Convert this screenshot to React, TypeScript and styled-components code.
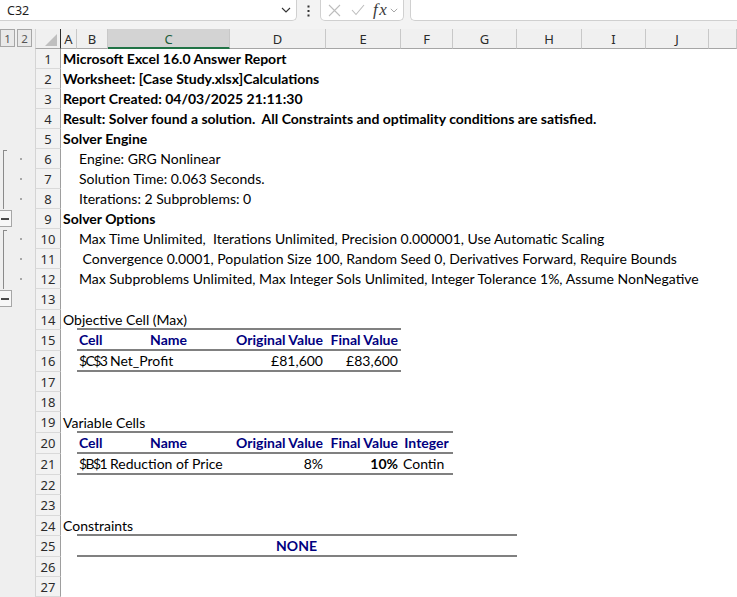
import React from "react";
import styled, { createGlobalStyle } from "styled-components";

const GlobalStyle = createGlobalStyle`
  html, body { margin: 0; padding: 0; background: #fff; overflow: hidden; }
  #root { width: 737px; height: 597px; overflow: hidden; }
`;

const CELL_FONT = `Lato, "Open Sans", sans-serif`;
const UI_FONT = `"Noto Sans", "Liberation Sans", sans-serif`;

const COL_LETTERS = ["A", "B", "C", "D", "E", "F", "G", "H", "I", "J", ""];
const COL_W = [16, 31, 122, 96, 75, 52, 64, 65, 64, 63];
const ROW_H = [20, 20, 20, 20, 20, 20, 20, 20, 20, 20, 20, 20, 21, 20, 21, 21, 20, 20, 21, 21, 21, 20, 21, 20, 21, 20, 20];

/* ---------- top bar ---------- */
const TopBar = styled.div`
  display: flex;
  align-items: flex-start;
  height: 29px;
  background: #f3f3f3;
  font-family: ${UI_FONT};
`;

const NameBox = styled.div`
  box-sizing: border-box;
  width: 297px;
  height: 21px;
  background: #fff;
  border-right: 1px solid #d0d0d0;
  border-bottom: 1px solid #d0d0d0;
  border-bottom-right-radius: 5px;
  display: flex;
  align-items: center;
  justify-content: space-between;
  padding: 0 5px 0 7px;
  font-size: 12.5px;
  color: #1f1f1f;
`;

const Kebab = styled.div`
  width: 23px;
  height: 21px;
  display: flex;
  align-items: center;
  justify-content: center;
`;

const FxBox = styled.div`
  box-sizing: border-box;
  width: 84px;
  height: 21px;
  background: #fff;
  border: 1px solid #d0d0d0;
  border-top: none;
  border-radius: 0 0 5px 5px;
  display: flex;
  align-items: center;
  padding: 0 2px 0 7px;
  gap: 10px;
`;

const FxLabel = styled.span`
  font-family: "Liberation Serif", "DejaVu Serif", serif;
  font-style: italic;
  font-size: 17px;
  letter-spacing: 1.5px;
  line-height: 18px;
  color: #3a3a3a;
  margin-left: -2px;
  display: flex;
  align-items: center;
  gap: 2px;
`;

const FormulaBox = styled.div`
  box-sizing: border-box;
  flex: 1;
  margin-left: 6px;
  height: 21px;
  background: #fff;
  border-left: 1px solid #d0d0d0;
  border-bottom: 1px solid #d0d0d0;
  border-bottom-left-radius: 5px;
`;

/* ---------- sheet grid ---------- */
const Sheet = styled.div`
  display: grid;
  grid-template-columns: 35px 26px ${COL_W.map((w) => `${w}px`).join(" ")} 1fr;
  grid-template-rows: 20px ${ROW_H.map((h) => `${h}px`).join(" ")};
  background: #fff;
`;

type Place = { $row: number; $col: number; $span?: number; $rowSpan?: number };

const OutlineTrack = styled.div<Place>`
  grid-row: ${(p) => p.$row} / span ${(p) => p.$rowSpan ?? 1};
  grid-column: ${(p) => p.$col};
  background: #efefef;
`;

const LevelButtons = styled.div<Place>`
  grid-row: ${(p) => p.$row};
  grid-column: ${(p) => p.$col};
  background: #efefef;
  display: flex;
  gap: 2px;
  align-items: flex-start;
`;

const LevelButton = styled.div`
  box-sizing: border-box;
  width: 15px;
  height: 18px;
  border: 1px solid #a6a6a6;
  background: #e9e9e9;
  display: flex;
  align-items: center;
  justify-content: center;
  font-family: ${UI_FONT};
  font-size: 11.5px;
  color: #555;
`;

const Bracket = styled.div<Place>`
  grid-row: ${(p) => p.$row} / span ${(p) => p.$rowSpan ?? 1};
  grid-column: ${(p) => p.$col};
  margin: 1px 0 0 3px;
  width: 3px;
  border-left: 1px solid #8a8a8a;
  border-top: 1px solid #8a8a8a;
`;

const MinusBox = styled.div<Place>`
  grid-row: ${(p) => p.$row};
  grid-column: ${(p) => p.$col};
  box-sizing: border-box;
  width: 12px;
  height: 17px;
  margin-top: 1px;
  border: 1px solid #a6a6a6;
  border-left: none;
  background: #f7f7f7;
  display: flex;
  align-items: center;
  padding-left: 1px;
`;

const Dash = styled.span`
  width: 8px;
  height: 2px;
  background: #4a4a4a;
`;

const OutlineDot = styled.div<Place>`
  grid-row: ${(p) => p.$row};
  grid-column: ${(p) => p.$col};
  align-self: center;
  justify-self: start;
  margin-left: 20px;
  width: 2px;
  height: 2px;
  background: #a8a8a8;
`;

const Corner = styled.div<Place>`
  grid-row: ${(p) => p.$row};
  grid-column: ${(p) => p.$col};
  box-sizing: border-box;
  background: #f0f0f0;
  border-left: 1px solid #d4d4d4;
  border-right: 1px solid #2b2b2b;
  border-bottom: 1px solid #a6a6a6;
  display: flex;
  align-items: flex-end;
  justify-content: flex-end;
  padding: 0 3px 2px 0;
`;

const ColHead = styled.div<Place & { $selected?: boolean }>`
  grid-row: ${(p) => p.$row};
  grid-column: ${(p) => p.$col};
  box-sizing: border-box;
  background: ${(p) => (p.$selected ? "#d3d3d3" : "#f0f0f0")};
  border-right: 1px solid #c8c8c8;
  border-bottom: ${(p) => (p.$selected ? "2px solid #217346" : "1px solid #a6a6a6")};
  display: flex;
  align-items: center;
  justify-content: center;
  padding-top: ${(p) => (p.$selected ? "1px" : "0")};
  font-family: ${UI_FONT};
  font-size: 13px;
  color: ${(p) => (p.$selected ? "#1d5e3a" : "#2b2b2b")};
`;

const RowHead = styled.div<Place>`
  grid-row: ${(p) => p.$row};
  grid-column: ${(p) => p.$col};
  box-sizing: border-box;
  background: #f2f2f2;
  border-left: 1px solid #d4d4d4;
  border-right: 1px solid #9e9e9e;
  border-bottom: 1px solid #d9d9d9;
  display: flex;
  align-items: center;
  justify-content: center;
  font-family: ${UI_FONT};
  font-size: 13px;
  color: #2b2b2b;
`;

type CellStyle = Place & {
  $bold?: boolean;
  $navy?: boolean;
  $align?: "left" | "right" | "center";
  $rule?: boolean;
  $tight?: boolean;
};

const Cell = styled.div<CellStyle>`
  grid-row: ${(p) => p.$row};
  grid-column: ${(p) => p.$col} / span ${(p) => p.$span ?? 1};
  box-sizing: border-box;
  min-width: 0;
  display: flex;
  align-items: center;
  justify-content: ${(p) =>
    p.$align === "right" ? "flex-end" : p.$align === "center" ? "center" : "flex-start"};
  padding: 0 3px 0 2px;
  font-family: ${CELL_FONT};
  font-size: 14px;
  line-height: 20px;
  letter-spacing: ${(p) => (p.$tight ? "-1.6px" : "0")};
  font-weight: ${(p) => (p.$bold ? 700 : 400)};
  color: ${(p) => (p.$navy ? "#000080" : "#000")};
  white-space: pre;
  border-bottom: ${(p) => (p.$rule ? "2px solid #808080" : "none")};
`;

/* ---------- icons ---------- */
const Chevron = ({ size = 10, color = "#444" }: { size?: number; color?: string }) => (
  <svg width={size} height={size * 0.6} viewBox="0 0 10 6">
    <polyline points="1,1 5,5 9,1" fill="none" stroke={color} strokeWidth="1.1" />
  </svg>
);

const KebabIcon = () => (
  <svg width="3" height="12" viewBox="0 0 3 12">
    <rect x="0.5" y="0.5" width="2" height="2" fill="#333" />
    <rect x="0.5" y="5" width="2" height="2" fill="#333" />
    <rect x="0.5" y="9.5" width="2" height="2" fill="#333" />
  </svg>
);

const CrossIcon = () => (
  <svg width="13" height="13" viewBox="0 0 13 13">
    <path d="M1 1 L12 12 M12 1 L1 12" stroke="#bdbdbd" strokeWidth="1.1" fill="none" />
  </svg>
);

const CheckIcon = () => (
  <svg width="14" height="12" viewBox="0 0 14 12">
    <polyline points="1,6 5,10.5 13,1" stroke="#bdbdbd" strokeWidth="1.1" fill="none" />
  </svg>
);

const SelectAll = () => (
  <svg width="12" height="12" viewBox="0 0 12 12">
    <polygon points="12,0 12,12 0,12" fill="#bfbfbf" />
  </svg>
);

/* ---------- data ---------- */
type CellDef = {
  row: number;
  col: number; // 0 = A
  span?: number;
  text?: string;
  bold?: boolean;
  navy?: boolean;
  align?: "left" | "right" | "center";
  rule?: boolean;
  tight?: boolean;
};

const rules = (row: number, from: number, to: number): CellDef[] =>
  Array.from({ length: to - from + 1 }, (_, i) => ({ row, col: from + i, rule: true }));

const CELLS: CellDef[] = [
  { row: 1, col: 0, text: "Microsoft Excel 16.0 Answer Report", bold: true },
  { row: 2, col: 0, text: "Worksheet: [Case Study.xlsx]Calculations", bold: true },
  { row: 3, col: 0, text: "Report Created: 04/03/2025 21:11:30", bold: true },
  {
    row: 4,
    col: 0,
    text: "Result: Solver found a solution.  All Constraints and optimality conditions are satisfied.",
    bold: true,
  },
  { row: 5, col: 0, text: "Solver Engine", bold: true },
  { row: 6, col: 1, text: "Engine: GRG Nonlinear" },
  { row: 7, col: 1, text: "Solution Time: 0.063 Seconds." },
  { row: 8, col: 1, text: "Iterations: 2 Subproblems: 0" },
  { row: 9, col: 0, text: "Solver Options", bold: true },
  {
    row: 10,
    col: 1,
    text: "Max Time Unlimited,  Iterations Unlimited, Precision 0.000001, Use Automatic Scaling",
  },
  {
    row: 11,
    col: 1,
    text: " Convergence 0.0001, Population Size 100, Random Seed 0, Derivatives Forward, Require Bounds",
  },
  {
    row: 12,
    col: 1,
    text: "Max Subproblems Unlimited, Max Integer Sols Unlimited, Integer Tolerance 1%, Assume NonNegative",
  },
  { row: 14, col: 0, text: "Objective Cell (Max)" },
  ...rules(14, 1, 4),
  { row: 15, col: 1, text: "Cell", bold: true, navy: true, rule: true },
  { row: 15, col: 2, text: "Name", bold: true, navy: true, align: "center", rule: true },
  { row: 15, col: 3, text: "Original Value", bold: true, navy: true, align: "right", rule: true },
  { row: 15, col: 4, text: "Final Value", bold: true, navy: true, align: "right", rule: true },
  { row: 16, col: 1, text: "$C$3", rule: true, tight: true },
  { row: 16, col: 2, text: "Net_Profit", rule: true },
  { row: 16, col: 3, text: "£81,600", align: "right", rule: true },
  { row: 16, col: 4, text: "£83,600", align: "right", rule: true },
  { row: 19, col: 0, text: "Variable Cells" },
  ...rules(19, 1, 5),
  { row: 20, col: 1, text: "Cell", bold: true, navy: true, rule: true },
  { row: 20, col: 2, text: "Name", bold: true, navy: true, align: "center", rule: true },
  { row: 20, col: 3, text: "Original Value", bold: true, navy: true, align: "right", rule: true },
  { row: 20, col: 4, text: "Final Value", bold: true, navy: true, align: "right", rule: true },
  { row: 20, col: 5, text: "Integer", bold: true, navy: true, align: "center", rule: true },
  { row: 21, col: 1, text: "$B$1", rule: true, tight: true },
  { row: 21, col: 2, text: "Reduction of Price", rule: true },
  { row: 21, col: 3, text: "8%", align: "right", rule: true },
  { row: 21, col: 4, text: "10%", bold: true, align: "right", rule: true },
  { row: 21, col: 5, text: "Contin", rule: true },
  { row: 24, col: 0, text: "Constraints" },
  ...rules(24, 1, 6),
  { row: 25, col: 1, span: 6, text: "NONE", bold: true, navy: true, align: "center", rule: true },
];

const GROUPS = [
  { from: 6, to: 8, minus: 9 },
  { from: 10, to: 12, minus: 13 },
];

// grid column for sheet column index (A = 0)
const gc = (c: number) => c + 3;
// grid row for sheet row (1-based)
const gr = (r: number) => r + 1;

export default function App() {
  return (
    <>
      <GlobalStyle />
      <TopBar>
        <NameBox>
          <span>C32</span>
          <Chevron size={10} color="#333" />
        </NameBox>
        <Kebab>
          <KebabIcon />
        </Kebab>
        <FxBox>
          <CrossIcon />
          <CheckIcon />
          <FxLabel>
            fx
            <Chevron size={8} color="#9a9a9a" />
          </FxLabel>
        </FxBox>
        <FormulaBox />
      </TopBar>

      <Sheet>
        <LevelButtons $row={1} $col={1}>
          <LevelButton>1</LevelButton>
          <LevelButton>2</LevelButton>
        </LevelButtons>
        <Corner $row={1} $col={2}>
          <SelectAll />
        </Corner>
        {COL_LETTERS.map((l, i) => (
          <ColHead key={`h${i}`} $row={1} $col={gc(i)} $selected={l === "C"}>
            {l}
          </ColHead>
        ))}

        <OutlineTrack $row={2} $col={1} $rowSpan={ROW_H.length} />
        {GROUPS.map((g) => (
          <React.Fragment key={g.from}>
            <Bracket $row={gr(g.from)} $col={1} $rowSpan={g.to - g.from + 1} />
            {Array.from({ length: g.to - g.from + 1 }, (_, i) => (
              <OutlineDot key={i} $row={gr(g.from + i)} $col={1} />
            ))}
            <MinusBox $row={gr(g.minus)} $col={1}>
              <Dash />
            </MinusBox>
          </React.Fragment>
        ))}

        {ROW_H.map((_, i) => (
          <RowHead key={`r${i}`} $row={gr(i + 1)} $col={2}>
            {i + 1}
          </RowHead>
        ))}

        {CELLS.map((c, i) => (
          <Cell
            key={`c${i}`}
            $row={gr(c.row)}
            $col={gc(c.col)}
            $span={c.span}
            $bold={c.bold}
            $navy={c.navy}
            $align={c.align}
            $rule={c.rule}
            $tight={c.tight}
          >
            {c.text}
          </Cell>
        ))}
      </Sheet>
    </>
  );
}
